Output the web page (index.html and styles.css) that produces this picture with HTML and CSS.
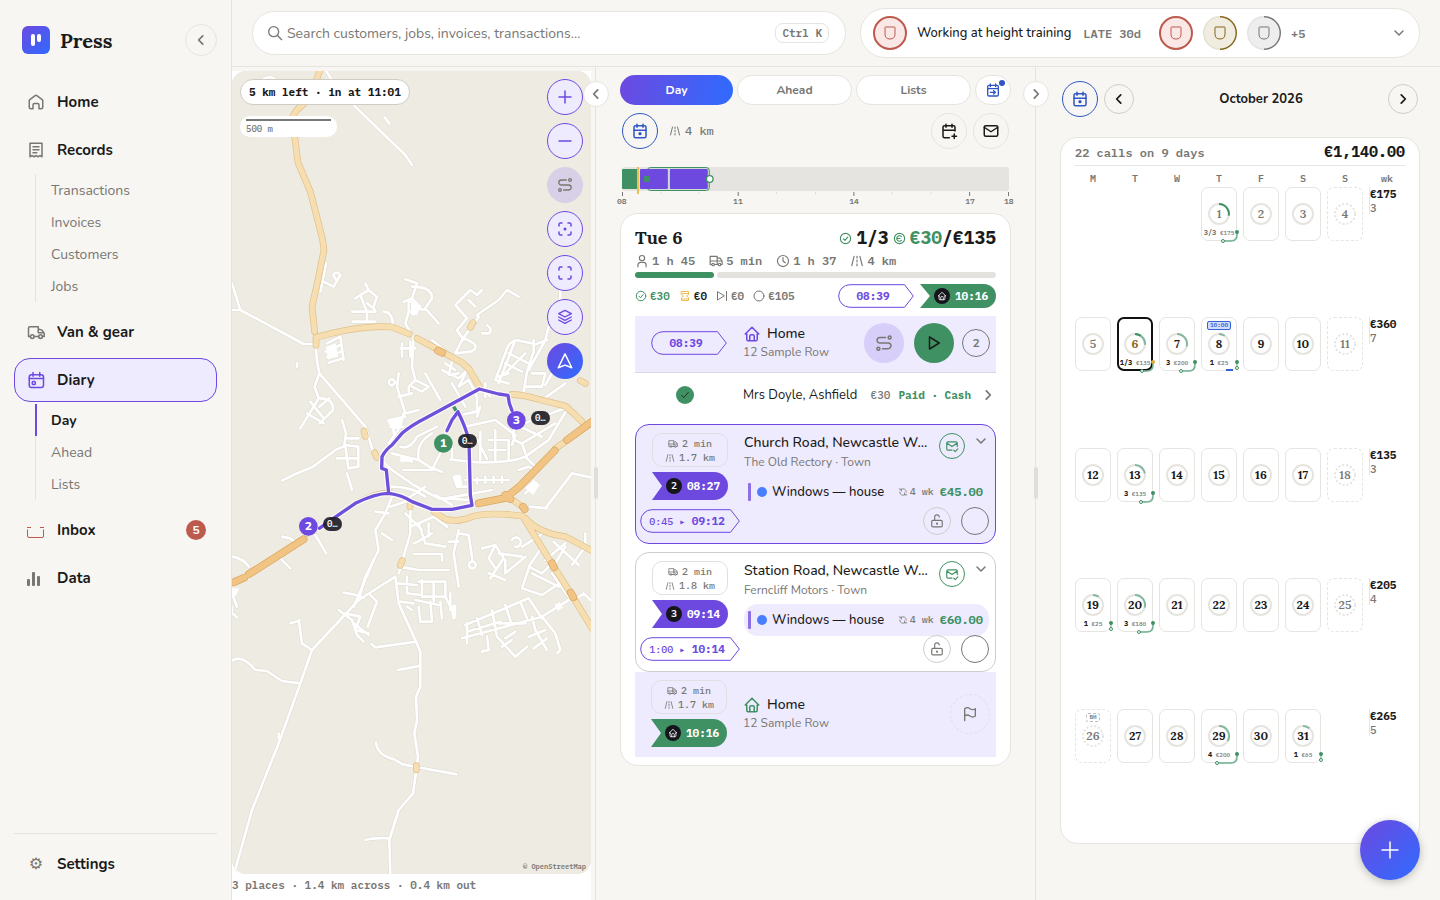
FILE: index.html
```html
<!DOCTYPE html>
<html lang="en">
<head>
<meta charset="utf-8">
<meta name="viewport" content="width=device-width, initial-scale=1">
<title>Press – Diary</title>
<link rel="stylesheet" href="styles.css">
</head>
<body>
<svg class="defs" aria-hidden="true">
  <symbol id="i-home" viewBox="0 0 24 24"><path d="M3 10.5a2 2 0 0 1 .8-1.6l7-5.3a2 2 0 0 1 2.4 0l7 5.3a2 2 0 0 1 .8 1.6V19a2 2 0 0 1-2 2h-3v-5a2 2 0 0 0-2-2h-4a2 2 0 0 0-2 2v5H5a2 2 0 0 1-2-2z"/></symbol>
  <symbol id="i-house" viewBox="0 0 24 24"><path d="M5 12H3l9-9 9 9h-2M5 12v7a2 2 0 0 0 2 2h10a2 2 0 0 0 2-2v-7M9 21v-6a2 2 0 0 1 2-2h2a2 2 0 0 1 2 2v6"/></symbol>
  <symbol id="i-receipt" viewBox="0 0 24 24"><path d="M4 21V3h16v18l-2.6-1.6L14.700 21 12 19.400 9.300 21l-2.700-1.600zM8 7.500h8M8 11.500h8M8 15.500h5"/></symbol>
  <symbol id="i-van" viewBox="0 0 24 24"><circle cx="7" cy="18" r="2.500"/><circle cx="18" cy="18" r="2.500"/><path d="M4.500 18H2V7a2 2 0 0 1 2-2h11v3l5 1.500 3 4.500v4h-2.500M9.500 18h6M15 8v5h7"/></symbol>
  <symbol id="i-truck" viewBox="0 0 24 24"><circle cx="7" cy="18" r="2.200"/><circle cx="18" cy="18" r="2.200"/><path d="M4.500 18H2V4h12v13.500M9.500 18h6M14 7h5l3.500 5v6h-2M2 12h12M14 12h8"/></symbol>
  <symbol id="i-diary" viewBox="0 0 24 24"><rect x="3" y="5" width="19" height="17" rx="3"/><path d="M8 2v5M17 2v5M3 10h19"/><rect x="7" y="14" width="4" height="4" rx="1"/></symbol>
  <symbol id="i-cal" viewBox="0 0 24 24"><rect x="4" y="5" width="16" height="16" rx="2"/><path d="M8 3v4M16 3v4M4 11h16"/><circle cx="12" cy="15.500" r="1.200" fill="currentColor"/></symbol>
  <symbol id="i-calgo" viewBox="0 0 24 24"><rect x="4" y="5" width="16" height="16" rx="2"/><path d="M8 3v4M16 3v4M4 10h16M8 15.500h7M13 13l2.500 2.500L13 18"/></symbol>
  <symbol id="i-caladd" viewBox="0 0 24 24"><path d="M12.500 21H6a2 2 0 0 1-2-2V7a2 2 0 0 1 2-2h12a2 2 0 0 1 2 2v5M8 3v4M16 3v4M4 11h16M16 19h6M19 16v6"/></symbol>
  <symbol id="i-mail" viewBox="0 0 24 24"><rect x="3" y="5" width="18" height="14" rx="2"/><path d="M3 7l9 6 9-6"/></symbol>
  <symbol id="i-mailok" viewBox="0 0 24 24"><path d="M12 19H5a2 2 0 0 1-2-2V7a2 2 0 0 1 2-2h14a2 2 0 0 1 2 2v6M3 7l9 6 9-6M15 19l2.500 2.500L22 17"/></symbol>
  <symbol id="i-left" viewBox="0 0 24 24"><path d="M15 5l-7 7 7 7"/></symbol>
  <symbol id="i-right" viewBox="0 0 24 24"><path d="M9 5l7 7-7 7"/></symbol>
  <symbol id="i-down" viewBox="0 0 24 24"><path d="M4 8l8 8 8-8"/></symbol>
  <symbol id="i-search" viewBox="0 0 24 24"><circle cx="10" cy="10" r="7.500"/><path d="M15.500 15.500L22 22"/></symbol>
  <symbol id="i-shield" viewBox="0 0 12 14"><path d="M1.500 1h9q.5 0 .5.500V8q0 5-5 5T1 8V1.500Q1 1 1.500 1z"/></symbol>
  <symbol id="i-plus" viewBox="0 0 24 24"><path d="M12 4v16M4 12h16"/></symbol>
  <symbol id="i-minus" viewBox="0 0 24 24"><path d="M4 12h16"/></symbol>
  <symbol id="i-route" viewBox="0 0 24 24"><circle cx="4.500" cy="19.500" r="2"/><circle cx="19.500" cy="4.500" r="2"/><path d="M10 19.500h7.500a3.500 3.500 0 0 0 0-7.500h-11a3.500 3.500 0 0 1 0-7.500H14"/></symbol>
  <symbol id="i-focus" viewBox="0 0 24 24"><path d="M4 8V6a2 2 0 0 1 2-2h2M16 4h2a2 2 0 0 1 2 2v2M20 16v2a2 2 0 0 1-2 2h-2M8 20H6a2 2 0 0 1-2-2v-2"/><circle cx="12" cy="12" r="1" fill="currentColor"/></symbol>
  <symbol id="i-frame" viewBox="0 0 24 24"><path d="M4 8V6a2 2 0 0 1 2-2h2M16 4h2a2 2 0 0 1 2 2v2M20 16v2a2 2 0 0 1-2 2h-2M8 20H6a2 2 0 0 1-2-2v-2"/></symbol>
  <symbol id="i-layers" viewBox="0 0 24 24"><path d="M12 2l9.500 5-9.500 5-9.500-5zM2.500 12l9.500 5 9.500-5M2.500 16.500L12 21.500l9.500-5"/></symbol>
  <symbol id="i-nav" viewBox="0 0 24 24"><path d="M12 2.500L21 21l-9-3.500L3 21z"/></symbol>
  <symbol id="i-person" viewBox="0 0 24 24"><circle cx="12" cy="7" r="4.500"/><path d="M5 22v-3a4.500 4.500 0 0 1 4.500-4.500h5A4.500 4.500 0 0 1 19 19v3"/></symbol>
  <symbol id="i-clock" viewBox="0 0 24 24"><circle cx="12" cy="12" r="9.500"/><path d="M12 6v6l4 3"/></symbol>
  <symbol id="i-road" viewBox="0 0 24 24"><path d="M7 4L3 20M17 4l4 16M12 4v3M12 10.500v3M12 17v3"/></symbol>
  <symbol id="i-okring" viewBox="0 0 24 24"><circle cx="12" cy="12" r="9.500"/><path d="M8 12.500l3 3 5-6"/></symbol>
  <symbol id="i-euro" viewBox="0 0 24 24"><circle cx="12" cy="12" r="9.500"/><path d="M15.500 8.500a5 5 0 1 0 0 7M7 12h6"/></symbol>
  <symbol id="i-ring" viewBox="0 0 24 24"><circle cx="12" cy="12" r="10"/></symbol>
  <symbol id="i-glass" viewBox="0 0 24 24"><path d="M5 3h14v6l-4 3 4 3v6H5v-6l4-3-4-3zM7 7h10M7 18h10"/></symbol>
  <symbol id="i-skip" viewBox="0 0 24 24"><path d="M3 4v16l13-8zM21 3v18"/></symbol>
  <symbol id="i-play" viewBox="0 0 24 24"><path d="M6 4v16l13-8z"/></symbol>
  <symbol id="i-check" viewBox="0 0 24 24"><path d="M4 13l5 5L20 6"/></symbol>
  <symbol id="i-loop" viewBox="0 0 24 24"><path d="M20 12A8 8 0 0 0 7 6M3 5h5v5M4 12a8 8 0 0 0 13 6M21 19h-5v-5"/></symbol>
  <symbol id="i-lock" viewBox="0 0 24 24"><rect x="3" y="11" width="18" height="11" rx="2"/><circle cx="12" cy="16.500" r=".8"/><path d="M8 11V6a4 4 0 0 1 8-1"/></symbol>
  <symbol id="i-flag" viewBox="0 0 24 24"><path d="M4 22V4q4-3 8 0t8 0v11q-4 3-8 0t-8 0"/></symbol>
  <symbol id="i-tagshape" viewBox="0 0 76 24"><path d="M12 .7H66.500L75.300 12 66.500 23.300H12A11.300 11.300 0 0 1 12 .7z"/></symbol>
  <symbol id="i-tagwide" viewBox="0 0 100 24"><path d="M12 .7H90.500L99.300 12 90.500 23.300H12A11.300 11.300 0 0 1 12 .7z"/></symbol>
</svg>

<div class="app">
  <aside class="side">
    <div class="brand">
      <svg class="logo" viewBox="0 0 28 28" aria-hidden="true"><defs><linearGradient id="lg" x1="0" y1="0" x2="1" y2="1"><stop offset="0" stop-color="#6d49e0"/><stop offset="1" stop-color="#2f6bff"/></linearGradient></defs><rect width="28" height="28" rx="6" fill="url(#lg)"/><rect x="9" y="8" width="4" height="12" rx="2" fill="#fff"/><rect x="15" y="8" width="4" height="8" rx="2" fill="#fff"/></svg>
      <span class="brand-name">Press</span>
      <button class="round r32" aria-label="Collapse menu"><svg class="ic s14"><use href="#i-left"/></svg></button>
    </div>
    <nav class="nav">
      <a class="item" href="#"><svg class="ic s18"><use href="#i-home"/></svg>Home</a>
      <a class="item" href="#"><svg class="ic s18"><use href="#i-receipt"/></svg>Records</a>
      <div class="sub">
        <a href="#">Transactions</a><a href="#">Invoices</a><a href="#">Customers</a><a href="#">Jobs</a>
      </div>
      <a class="item" href="#"><svg class="ic s18"><use href="#i-van"/></svg>Van &amp; gear</a>
      <a class="item on" href="#"><svg class="ic s18"><use href="#i-diary"/></svg>Diary</a>
      <div class="sub">
        <a class="cur" href="#">Day</a><a href="#">Ahead</a><a href="#">Lists</a>
      </div>
      <a class="item" href="#"><svg class="tray" viewBox="0 0 18 18"><path d="M.5 8.500V15q0 1.500 1.500 1.500h13q1.500 0 1.500-1.500V8.500M0 6.500h4M13 6.500h4"/></svg>Inbox<span class="badge">5</span></a>
      <a class="item" href="#"><svg class="bars" viewBox="0 0 18 18"><rect x="0" y="10" width="3" height="7" rx="1"/><rect x="5" y="3" width="3" height="14" rx="1"/><rect x="10" y="7" width="3" height="10" rx="1"/></svg>Data</a>
    </nav>
    <div class="side-foot"><a class="item" href="#"><span class="gear">⚙</span>Settings</a></div>
  </aside>

  <header class="top">
    <label class="search"><svg class="ic s16"><use href="#i-search"/></svg><input type="search" aria-label="Search" placeholder="Search customers, jobs, invoices, transactions…"><kbd>Ctrl K</kbd></label>
    <button class="alerts">
      <span class="due red"><svg><use href="#i-shield"/></svg></span>
      <span class="alert-name">Working at height training</span>
      <span class="late">LATE 30d</span>
      <span class="dues"><span class="due red"><svg><use href="#i-shield"/></svg></span><span class="due gold"><svg><use href="#i-shield"/></svg></span><span class="due grey"><svg><use href="#i-shield"/></svg></span></span>
      <span class="more">+5</span>
      <svg class="ic s12"><use href="#i-down"/></svg>
    </button>
  </header>

  <main class="cols">
    <section class="mapcol">
      <div class="map">
        <svg class="mapart" viewBox="0 -507 1077 2409" preserveAspectRatio="xMidYMid slice" role="img" aria-label="Route map">
          <defs>
            <g id="lanes">
              <path d="M280 -510L300 -480 370 -400 520 -255 540 -225M458 -368l14 18M95 -484q15 -8 32 0"/>
              <path d="M0 130L25 210 215 312H250M0 210H25M250 310L256 370 262 400 400 560 425 640 480 690 545 735 620 775 720 780M262 400L248 440 260 475 205 565M235 485l40 50M265 475q40 0 38 35l-40 40M225 520l50 30M262 500l30 -25M195 370v10"/>
              <path d="M285 310L325 290 335 360M280 335l45 -20M285 352l45 -18M290 368l45 -14"/>
              <path d="M282 70L265 155M275 125l30 15 20 -35q-10 -15 -22 0l10 15M400 130L410 150 385 165 370 175M410 150l25 20 -10 30M385 165l20 50v30M360 215h70M362 245h68M405 190l25 20M455 215q25 0 28 38"/>
              <path d="M520 118l35 12 -15 45 -25 10M540 140q60 0 60 35l-20 30L620 250M540 175l25 25 -15 20 -20 -8v-32l30 20M555 205l25 5M530 215L520 250 540 285"/>
              <path d="M670 195l45 -45 20 15 15 -15M670 195l35 40 -30 35 20 30M735 225l65 -45 25 -30 35 20M740 230l-50 70 -20 40M690 290l35 20q15 15 -10 25l-45 5M765 255q20 15 5 25h-20M710 180l20 20"/>
              <path d="M510 310v40M505 325h45M535 305v45M545 290L540 380 550 420 590 440 570 455 540 440M550 420l-20 20v15M500 400L495 440 520 520 560 510M485 420a9 9 0 1 0 1 1M500 470l40 -10M515 520L505 560 470 610"/>
              <path d="M580 400L625 480M660 430l40 70M640 370l30 20M630 390l50 25 20 -20M660 365l-10 40 30 -5M700 400l-20 40 30 -20 25 50M600 300L660 350M760 430v40M745 440l30 30"/>
              <path d="M985 150V180M950 260L940 300M860 300q-30 0 -40 40L790 420 830 430M850 300l-50 130M880 340l-60 60M905 300v35l-20 60 -10 60M850 300l50 10M830 340l60 30M820 370l50 25M900 400h40l-10 40H880M940 300l-50 90M960 400l-20 35M1000 430l-70 50M830 400l-30 10M905 315l40 -15"/>
              <path d="M735 470v45l-40 8M745 500l-10 30M700 560l90 -20 60 45 -10 30M705 605l30 -8 30 60M745 575v85M770 600h60v60M790 570v90M770 630h50M850 560L1010 500M850 560q-20 40 20 50l100 -60M1010 500l-60 100 -70 50q-80 30 -225 8M880 650l40 40M930 590l-65 -30M860 690l30 -10 20 10M870 610l10 30"/>
              <path d="M470 540l50 -10M475 560h40M485 550v30M505 620q30 10 50 -30l60 -30M560 660q-10 -50 40 -80M480 640l80 20 40 25 30 10M600 690l30 -60M515 690h80M510 655l30 10M660 650V620"/>
              <path d="M150 722l40 -20 50 -20 75 -55 35 -12M330 540l12 40 -5 35 42 5v60l-30 5 -8 -60M315 655h65M345 700l15 50M340 595h40"/>
              <path d="M700 720h130M735 715v15M760 710v18M785 710v18M810 710v18M665 710l10 30h30M640 775L780 750M610 765l50 30M480 740q60 0 100 30M520 780l60 -40"/>
              <path d="M940 805L1020 700 1077 712M895 800l50 5M880 760l35 -30M250 885l33 56M145 955l30 30M150 890l25 5 20 15M0 950q35 5 50 30"/>
              <path d="M480 770L460 820 430 870 440 930 400 1010 380 1080M475 800l60 -20v100L500 1000M430 815l40 5M520 820l50 50M535 860l70 -30 40 30M480 900l-30 -20M560 850l20 60 60 10M590 850v40M545 942h85v20M600 880q-50 30 -55 30M500 980l60 10h90M680 870L665 940 680 1040M680 880l30 5 12 80a10 10 0 1 1 -2 0M650 905h30"/>
              <path d="M750 925l40 -10 -20 40 20 30M790 915l25 40 -40 60M800 940l70 10M840 900a14 14 0 1 1 10 20M870 920l50 -30 10 30 -40 60 40 20 30 -30M880 950l-60 50M920 890l20 -20M890 985l-20 60 60 20 60 -40M900 1000l80 40M940 960l60 -50M965 905L1040 975M1000 920l-30 50M1060 880v40l-40 55M820 960v40M770 1000l50 20"/>
              <path d="M490 1010L380 1080 240 1230 205 1330 140 1510 60 1710 5 1905M425 960L365 1100M335 1058l30 5 30 10M490 1010L500 1090 550 1200 565 1235V1340L552 1370 555 1440 547 1480 558 1550 553 1590 543 1660 500 1710 472 1800 475 1902M553 1205L430 1222 418 1212M565 1277L525 1285 497 1290M0 1262q30 -20 70 28l35 3 45 30 55 7M240 1230L210 1210 200 1140M175 1150l28 -8M140 1480v15M432 1508q5 40 55 50l25 15 42 8 120 22M400 1800q25 -8 72 -5"/>
              <path d="M415 1065l20 20 -28 75M320 1110l40 30 15 45 20 20M340 1120l45 10 -15 40 40 10M365 1150l45 35"/>
              <path d="M495 1030l60 5M525 1010v50l45 5M560 1025h80v45h-70v-50M605 1025v60M505 1085l40 5M550 1080l70 15M560 1100l5 45h35l-5 -60M625 1085l5 50M640 1070l20 40 5 25M525 1100l15 10M655 1060v50"/>
              <path d="M690 1195l240 -65 80 -50M705 1150v60M700 1155l190 -80 40 60M735 1135l15 50M780 1110l15 80 55 60 35 -30M820 1095l20 60M865 1085l20 50M705 1175l100 -30M800 1150h80M765 1190l5 40 -20 5M820 1195l30 -20M840 1200l-30 20M930 1130l40 50 15 50 -10 10M900 1130l10 40 35 60M890 1190l50 -20M905 1225l40 -30M960 1000L1010 1070M1035 1075l20 -15 20 20M0 1060l15 40M0 1100v20l15 12"/>
            </g>
            <g id="yards"><path d="M282 320l30 -10 6 40 -30 8zM668 705h18l5 32h-20zM880 745l25 -25 18 15 -20 30zM465 540l42 -10v30l-25 12zM505 645l38 8v12h-38zM537 185h20v40h-20zM660 1095h12v40h-12zM968 1095l15 -8 10 15 -15 10zM0 1045h22l-10 22H0z"/></g>
            <g id="minor">
              <path d="M264 -510L250 -470Q232 -420 208 -402T180 -360L188 -310 198 -232 235 -145 252 -80 272 0 276 30 258 120 240 200 248 275"/>
              <path d="M252 316V292L300 280Q400 255 480 261L532 282M555 295L620 330 690 368 712 388 742 440M840 463Q880 465 920 478L1000 498 1030 525 1050 545M606 815L640 838Q680 848 720 830 770 815 870 828M873 830L960 972 1020 1066 1080 1165M880 835Q920 880 1000 890L1080 932M845 782L870 800M1045 422l15 8M511 962l-6 14M396 573l4 16M428 638l6 14M723 248l-8 14M534 795v6M553 1577v12"/>
              <path d="M970 626l28 -20"/>
            </g>
            <g id="major"><path d="M5 1027l32 -14M50 1003L215 898M740 790L820 774 860 742 968 632M820 765l15 12M1005 600L1080 545M618 332l12 6M960 970l6 12M1016 1058l8 14M873 800l5 8"/></g>
            <g id="trip"><path d="M262 865L300 838 370 790Q430 760 470 760L463 690 449 685 450 650Q460 630 480 615L510 580Q540 555 580 535L742 447 800 462 828 466 832 490 840 512M470 760Q510 765 540 785L600 808H660L720 796 715 765 711 605Q705 570 678 515L660 540 645 572"/></g>
          </defs>
          <rect y="-507" x="-2000" width="5000" height="2409" fill="#eeebe3"/>
          <g fill="none" stroke-linecap="round" stroke-linejoin="round">
            <use href="#lanes" stroke="#dcd9d0" stroke-width="11"/>
            <use href="#lanes" stroke="#fff" stroke-width="8"/>
            <use href="#yards" fill="#fff"/>
            <use href="#minor" stroke="#dfbf88" stroke-width="20"/>
            <use href="#minor" stroke="#f6deb0" stroke-width="16"/>
            <use href="#major" stroke="#d9a35b" stroke-width="23"/>
            <use href="#major" stroke="#f1c483" stroke-width="19"/>
            <path d="M215 898L370 783Q430 748 480 750" stroke="#dfbf88" stroke-width="3"/>
            <use href="#trip" stroke="#fff" stroke-width="17" opacity=".8"/>
            <use href="#trip" stroke="#6e50da" stroke-width="10"/>
            <path d="M665 500l7 12" stroke="#3f9163" stroke-width="10" stroke-linecap="butt"/>
          </g>
          <g class="pins">
            <circle cx="634" cy="610" r="28" fill="#3f9163"/><text x="634" y="622">1</text>
            <circle cx="229" cy="859" r="28" fill="#6d49e0"/><text x="229" y="871">2</text>
            <circle cx="853" cy="541" r="28" fill="#6d49e0"/><text x="853" y="553">3</text>
          </g>
          <g class="eta">
            <rect x="678" y="582" width="57" height="42" rx="21"/><text x="706" y="612">0…</text>
            <rect x="273" y="831" width="57" height="42" rx="21"/><text x="301" y="861">0…</text>
            <rect x="897" y="513" width="57" height="42" rx="21"/><text x="925" y="543">0…</text>
          </g>
        </svg>
        <div class="mapinfo">
          <span class="left">5 km left · in at 11:01</span>
          <span class="scale">500 m</span>
        </div>
        <div class="mapbtns">
          <button aria-label="Zoom in"><svg class="ic s18"><use href="#i-plus"/></svg></button>
          <button aria-label="Zoom out"><svg class="ic s18"><use href="#i-minus"/></svg></button>
          <button class="off" aria-label="Route"><svg class="ic s16"><use href="#i-route"/></svg></button>
          <button aria-label="Centre"><svg class="ic s18"><use href="#i-focus"/></svg></button>
          <button aria-label="Fit"><svg class="ic s18"><use href="#i-frame"/></svg></button>
          <button aria-label="Layers"><svg class="ic s16"><use href="#i-layers"/></svg></button>
          <button class="go" aria-label="Navigate"><svg class="ic s18"><use href="#i-nav"/></svg></button>
        </div>
        <span class="credit">© OpenStreetMap</span>
      </div>
      <p class="mapfoot">3 places · 1.4 km across · 0.4 km out</p>
    </section>

    <section class="day">
      <button class="round fold" aria-label="Collapse map"><svg class="ic s14"><use href="#i-left"/></svg></button>
      <i class="grip"></i>
      <div class="tabs">
        <button class="on">Day</button><button>Ahead</button><button>Lists</button>
        <button class="tabicon" aria-label="Jump to day"><svg class="ic s16"><use href="#i-calgo"/></svg><i></i></button>
      </div>
      <div class="tools">
        <button class="round r36 blue" aria-label="Today"><svg class="ic s18"><use href="#i-cal"/></svg></button>
        <span class="dist"><svg class="ic s12"><use href="#i-road"/></svg>4 km</span>
        <button class="round r36 dark push" aria-label="Add visit"><svg class="ic s18"><use href="#i-caladd"/></svg></button>
        <button class="round r36 dark" aria-label="Message"><svg class="ic s18"><use href="#i-mail"/></svg></button>
      </div>
      <div class="timeline">
        <svg viewBox="0 0 388 28" preserveAspectRatio="none" aria-hidden="true">
          <rect width="388" height="24" y="0" rx="3" fill="#e6e4e0"/>
          <rect x="25.500" y=".5" width="62" height="23" rx="3" fill="#cfdcd5" stroke="#3f9163"/>
          <rect y="2" width="16" height="20" rx="1" fill="#3f9163"/>
          <rect x="18" y="2" width="28" height="20" rx="1" fill="#6d49e0"/><rect x="48" y="2" width="38" height="20" rx="1" fill="#6d49e0"/>
          <rect x="22" y="9" width="6" height="6" rx="1" fill="#3f9163"/>
          <rect x="15" width="2" height="27" fill="#ecbf4c"/>
          <circle cx="88" cy="12" r="3.300" fill="#fff" stroke="#3f9163" stroke-width="1.300"/>
          <path d="M.5 25v4M116.500 25v4M232.500 25v4M348.500 25v4M387.500 25v4" stroke="#777"/>
          <path d="M39 25v2M77 25v2M155 25v2M194 25v2M271 25v2M310 25v2" stroke="#ddd"/>
        </svg>
        <div class="hours"><span>08</span><span>11</span><span>14</span><span>17</span><span>18</span></div>
      </div>

      <article class="card">
        <div class="headline"><h1>Tue 6</h1><p class="score"><svg class="ic s14 green"><use href="#i-okring"/></svg>1/3 <svg class="ic s14 green"><use href="#i-euro"/></svg><span><b class="green">€30</b>/€135</span></p></div>
        <div class="stats"><span><svg class="ic s14"><use href="#i-person"/></svg>1 h 45</span><span><svg class="ic s14"><use href="#i-truck"/></svg>5 min</span><span><svg class="ic s14"><use href="#i-clock"/></svg>1 h 37</span><span><svg class="ic s14"><use href="#i-road"/></svg>4 km</span></div>
        <div class="meter"><i></i><i></i></div>
        <div class="money">
          <span class="green"><svg class="ic s12"><use href="#i-okring"/></svg>€30</span>
          <span class="ink"><svg class="ic s12 amber"><use href="#i-glass"/></svg>€0</span>
          <span><svg class="ic s12"><use href="#i-skip"/></svg>€0</span>
          <span><svg class="ic s12"><use href="#i-ring"/></svg>€105</span>
          <span class="tag push"><svg><use href="#i-tagshape"/></svg>08:39</span>
          <span class="flag home low"><em><svg class="ic s12"><use href="#i-house"/></svg></em>10:16</span>
        </div>

        <div class="base">
          <div class="slot"><span class="tag"><svg><use href="#i-tagshape"/></svg>08:39</span></div>
          <div class="where"><h2><svg class="ic s18 violet"><use href="#i-house"/></svg>Home</h2><p>12 Sample Row</p></div>
          <button class="disc lilac" aria-label="Route"><svg class="ic s18"><use href="#i-route"/></svg></button>
          <button class="disc play" aria-label="Start"><svg class="ic s18"><use href="#i-play"/></svg></button>
          <button class="disc count">2</button>
        </div>

        <div class="done">
          <div class="slot"><span class="tick"><svg class="ic s10"><use href="#i-check"/></svg></span></div>
          <span class="who">Mrs Doyle, Ashfield</span><span class="sum">€30</span><span class="paid">Paid · Cash</span><svg class="ic s14"><use href="#i-right"/></svg>
        </div>

        <div class="stop active">
          <div class="slot">
            <div class="leg"><span><svg class="ic s10"><use href="#i-truck"/></svg>2 min</span><span><svg class="ic s10"><use href="#i-road"/></svg>1.7 km</span></div>
            <span class="flag"><em>2</em>08:27</span>
            <span class="tag wide"><svg><use href="#i-tagwide"/></svg><small>0:45 ▸</small> 09:12</span>
          </div>
          <div class="visit">
            <div class="vhead"><div class="vname"><h2>Church Road, Newcastle W…</h2><p>The Old Rectory · Town</p></div><button class="disc sent" aria-label="Sent"><svg class="ic s14"><use href="#i-mailok"/></svg></button><button class="bare" aria-label="Expand"><svg class="ic s12"><use href="#i-down"/></svg></button></div>
            <div class="job"><i class="bar"></i><i class="dot"></i><span class="jname">Windows — house</span><span class="freq"><svg class="ic s10"><use href="#i-loop"/></svg>4 wk</span><b>€45.00</b></div>
            <div class="acts"><button class="disc lock" aria-label="Lock"><svg class="ic s14"><use href="#i-lock"/></svg></button><button class="disc mark" aria-label="Mark done"></button></div>
          </div>
        </div>

        <div class="stop">
          <div class="slot">
            <div class="leg"><span><svg class="ic s10"><use href="#i-truck"/></svg>2 min</span><span><svg class="ic s10"><use href="#i-road"/></svg>1.8 km</span></div>
            <span class="flag"><em>3</em>09:14</span>
            <span class="tag wide"><svg><use href="#i-tagwide"/></svg><small>1:00 ▸</small> 10:14</span>
          </div>
          <div class="visit">
            <div class="vhead"><div class="vname"><h2>Station Road, Newcastle W…</h2><p>Ferncliff Motors · Town</p></div><button class="disc sent" aria-label="Sent"><svg class="ic s14"><use href="#i-mailok"/></svg></button><button class="bare" aria-label="Expand"><svg class="ic s12"><use href="#i-down"/></svg></button></div>
            <div class="job"><i class="bar"></i><i class="dot"></i><span class="jname">Windows — house</span><span class="freq"><svg class="ic s10"><use href="#i-loop"/></svg>4 wk</span><b>€60.00</b></div>
            <div class="acts"><button class="disc lock" aria-label="Lock"><svg class="ic s14"><use href="#i-lock"/></svg></button><button class="disc mark" aria-label="Mark done"></button></div>
          </div>
        </div>

        <div class="base end">
          <div class="slot">
            <div class="leg"><span><svg class="ic s10"><use href="#i-truck"/></svg>2 min</span><span><svg class="ic s10"><use href="#i-road"/></svg>1.7 km</span></div>
            <span class="flag home"><em><svg class="ic s12"><use href="#i-house"/></svg></em>10:16</span>
          </div>
          <div class="where"><h2><svg class="ic s18 green"><use href="#i-house"/></svg>Home</h2><p>12 Sample Row</p></div>
          <button class="disc finish" aria-label="Finish"><svg class="ic s16"><use href="#i-flag"/></svg></button>
        </div>
      </article>
    </section>

    <section class="month">
      <button class="round fold" aria-label="Collapse calendar"><svg class="ic s14"><use href="#i-right"/></svg></button>
      <i class="grip"></i>
      <div class="mhead">
        <button class="round r36 blue" aria-label="Today"><svg class="ic s18"><use href="#i-cal"/></svg></button>
        <button class="round r30 dark" aria-label="Previous month"><svg class="ic s14"><use href="#i-left"/></svg></button>
        <h2>October 2026</h2>
        <button class="round r30 dark" aria-label="Next month"><svg class="ic s14"><use href="#i-right"/></svg></button>
      </div>
      <div class="mcard">
        <div class="mtotal"><span>22 calls on 9 days</span><b>€1,140.00</b></div>
        <div class="dow"><span>M</span><span>T</span><span>W</span><span>T</span><span>F</span><span>S</span><span>S</span><span>wk</span></div>
        <div class="weeks" id="weeks"></div>
      </div>
    </section>
  </main>
  <button class="fab" aria-label="Add"><svg class="ic"><use href="#i-plus"/></svg></button>
</div>
<script src="calendar.js"></script>
</body>
</html>
```

FILE: styles.css
```css
:root {
  --sans: Nunito, Lato, "Noto Sans", sans-serif;
  --mono: "IBM Plex Mono", "Liberation Mono", monospace;
  --serif: Lora, "Liberation Serif", serif;
  --bg: #f7f6f2;
  --line: #e6e4df;
  --ink: #1a1a1a;
  --mute: #777773;
  --violet: #6d49e0;
  --lilac: #eeebfe;
  --green: #3f9163;
  --blue: #2f56c4;
  --red: #bd5a4e;
}
* { box-sizing: border-box; }
body { margin: 0; background: var(--bg); color: var(--ink); font: 14px/18px var(--sans); }
h1, h2, p { margin: 0; font-weight: 400; }
button { font: inherit; color: inherit; background: none; border: 0; padding: 0; cursor: pointer; }
a { color: inherit; text-decoration: none; }
.defs { position: absolute; width: 0; height: 0; }
.ic { fill: none; stroke: currentColor; stroke-width: 2; stroke-linecap: round; stroke-linejoin: round; flex: none; display: block; }
.s10 { width: 10px; height: 10px; }
.s12 { width: 12px; height: 12px; }
.s14 { width: 14px; height: 14px; }
.s16 { width: 16px; height: 16px; }
.s18 { width: 18px; height: 18px; }
.push { margin-left: auto; }
.green { color: var(--green); }
.violet { color: var(--violet); }
.amber { color: #ecbf4c; }
.round { display: grid; place-items: center; flex: none; border: 1px solid var(--line); border-radius: 50%; color: var(--mute); }
.round .s14 { stroke-width: 3; }
.r30 { width: 30px; height: 30px; border-color: #d0cec9; }
.r32 { width: 32px; height: 32px; }
.r36 { width: 36px; height: 36px; }
.round.blue { border-color: var(--blue); color: var(--blue); }
.round.dark { color: var(--ink); }

.app { display: grid; grid-template: auto 1fr / 232px minmax(0, 1fr); min-height: 100vh; }

.side { grid-row: 1 / 3; display: flex; flex-direction: column; padding: 24px 14px 14px; border-right: 1px solid var(--line); }
.brand { display: flex; align-items: center; gap: 10px; padding-left: 8px; margin-bottom: 24px; }
.logo { width: 28px; height: 28px; }
.brand-name { font: 700 20px/30px var(--serif); padding-top: 1px; }
.brand .round { margin-left: auto; }
.nav { display: flex; flex-direction: column; gap: 4px; }
.item { display: flex; align-items: center; gap: 12px; height: 44px; padding: 0 10px 0 12px; border: 1px solid transparent; border-radius: 16px; font-size: 15px; font-weight: 700; }
.item .ic { color: var(--mute); }
.item.on { background: var(--lilac); border-color: var(--violet); }
.item.on .ic { color: var(--violet); }
.sub { display: flex; flex-direction: column; margin: -2px 0 4px 21px; border-left: 1px solid var(--line); color: var(--mute); }
.sub a { padding: 8px 15px 6px; height: 32px; font-size: 14px; }
.sub .cur { color: var(--ink); font-weight: 700; border-left: 2px solid var(--violet); margin-left: -1px; padding-left: 14px; }
.tray, .bars { width: 18px; height: 18px; }
.tray { fill: none; stroke: var(--red); overflow: visible; }
.bars { fill: var(--mute); }
.badge { margin-left: auto; width: 20px; height: 20px; border-radius: 50%; background: var(--red); color: #fff; font-size: 12px; line-height: 20px; text-align: center; }
.gear { width: 18px; text-align: center; font: 16px/18px "DejaVu Sans", sans-serif; color: var(--mute); }
.side-foot { margin-top: auto; border-top: 1px solid var(--line); padding-top: 8px; }

.top { display: grid; grid-template-columns: minmax(0, 594fr) minmax(0, 560fr); align-items: center; gap: 14px; padding: 8px 20px; height: 67px; border-bottom: 1px solid var(--line); }
.search { display: flex; align-items: center; gap: 4px; height: 44px; padding: 0 16px 0 14px; background: #fff; border: 1px solid var(--line); border-radius: 22px; color: var(--mute); }
.search input { flex: 1; min-width: 0; border: 0; outline: 0; background: none; font: 14px/18px var(--sans); padding: 1px 0 0; }
.search input::placeholder { color: var(--mute); opacity: 1; }
kbd { font: 600 11px/16px var(--mono); border: 1px solid var(--line); border-radius: 8px; padding: 1px 6px; }
.alerts { display: flex; align-items: center; gap: 10px; height: 50px; padding: 0 14px 0 12px; background: #fff; border: 1px solid var(--line); border-radius: 25px; }
.due { width: 34px; height: 34px; border-radius: 50%; display: grid; place-items: center; }
.due svg { width: 12px; height: 14px; fill: none; stroke: currentColor; }
.due.red { color: var(--red); background: #f9e8e6; border: 2px solid; }
.due.gold { color: #86651a; background: radial-gradient(circle, #f0ecdf 15px, transparent 16px), conic-gradient(#86651a 50%, #e4e1d3 0); }
.due.grey { color: #777; background: radial-gradient(circle, #eeeeee 15px, transparent 16px), conic-gradient(#777 50%, #e2e2e2 0); }
.dues { display: flex; gap: 10px; margin-left: 8px; }
.alert-name { white-space: nowrap; font-size: 13px; font-weight: 500; padding-right: 2px; }
.late, .more { font: 600 12px/18px var(--mono); color: var(--mute); white-space: nowrap; padding-top: 2px; }
.alerts > .ic { color: var(--mute); margin-left: auto; stroke-width: 3; }

.cols { display: grid; grid-template-columns: minmax(0, 364fr) minmax(0, 440fr) minmax(0, 404fr); }
.mapcol { display: flex; flex-direction: column; margin: 4px 5px 0 0; background: #fff; }
.map { position: relative; flex: 1; border-radius: 14px; overflow: hidden; background: #eeebe3; }
.mapart { position: absolute; inset: 0; width: 100%; height: 100%; }
.pins text { fill: #fff; font: 800 36px var(--sans); text-anchor: middle; }
.eta rect { fill: #1e1e26; opacity: .92; }
.eta text { fill: #fff; font: 600 27px var(--mono); text-anchor: middle; }
.mapinfo { position: absolute; top: 8px; left: 8px; display: flex; flex-direction: column; align-items: flex-start; gap: 11px; }
.left { font: 700 11px/24px var(--mono); background: #fff; border: 1px solid #cfccc4; border-radius: 13px; padding: 0 8px; }
.scale { width: 97px; height: 21px; background: #fff; border-radius: 10px; padding: 3px 6px; font: 500 9px/15px var(--mono); color: var(--mute); }
.scale::before { content: ""; display: block; height: 2px; background: #777; }
.mapbtns { position: absolute; top: 8px; right: 8px; display: flex; flex-direction: column; gap: 8px; }
.mapbtns button { width: 36px; height: 36px; border-radius: 50%; display: grid; place-items: center; background: var(--lilac); border: 1px solid var(--violet); color: var(--violet); }
.mapbtns .off { background: #d8d0e6; border-color: #d8d0e6; color: var(--mute); }
.mapbtns .go { background: linear-gradient(135deg, #6d49e0, #2f6bff); border: 0; color: #fff; }
.credit { position: absolute; right: 5px; bottom: 2px; font: 600 7px/10px var(--mono); color: var(--mute); }
.mapfoot { font: 600 11px/22px var(--mono); color: var(--mute); padding-bottom: 4px; }

.day, .month { position: relative; border-left: 1px solid var(--line); }
.day { padding: 8px 25px 8px 24px; margin-left: -1px; }
.month { padding: 14px 20px 56px 24px; margin-left: -1px; }
.fold { position: absolute; left: -13px; top: 14px; width: 26px; height: 26px; background: #fff; }
.grip { position: absolute; left: -2px; top: 48%; width: 4px; height: 32px; border-radius: 2px; background: #e0ded9; }
.tabs { display: flex; gap: 4px; }
.tabs button { flex: 1; height: 30px; border-radius: 15px; background: #fff; border: 1px solid var(--line); font-size: 12px; font-weight: 700; color: var(--mute); }
.tabs .on { background: linear-gradient(100deg, #6d49e0, #2f6bff); border: 0; color: #fff; }
.tabs .tabicon { flex: 0 0 36px; position: relative; display: grid; place-items: center; color: var(--blue); }
.tabicon i { position: absolute; right: 5px; top: 4px; width: 6px; height: 6px; border-radius: 50%; background: var(--blue); }
.tools { display: flex; align-items: center; gap: 6px; padding: 8px 2px 18px; }
.dist { display: flex; align-items: center; gap: 4px; margin-left: 5px; font: 500 12px/18px var(--mono); color: var(--mute); }
.timeline { margin: 0 2px; }
.timeline svg { display: block; width: 100%; height: 28px; overflow: visible; }
.hours { display: grid; grid-template-columns: 3fr 3fr 3fr 1fr 0; font: 600 8px/12px var(--mono); color: var(--mute); }
.hours span { margin-left: -5px; width: 10px; }

.card { margin-top: 6px; background: #fff; border: 1px solid var(--line); border-radius: 18px; padding: 13px 14px 8px; }
.headline { display: flex; align-items: center; justify-content: space-between; height: 22px; }
h1 { font: 700 18px/22px var(--serif); }
.score { display: flex; align-items: center; gap: 4px; font: 700 18px/22px var(--mono); }
.score .ic { width: 13px; height: 13px; }
.stats { display: flex; gap: 14px; margin-top: 2px; font: 600 12px/20px var(--mono); color: var(--mute); }
.stats span, .money > span { display: flex; align-items: center; gap: 3px; }
.meter { display: flex; gap: 3px; margin-top: 1px; }
.meter i { height: 6px; flex: 281; background: #e4e2de; border-radius: 3px; }
.meter i:first-child { flex: 80; background: var(--green); }
.money { display: flex; align-items: center; gap: 9px; margin: 6px 0 8px; font: 600 11px/18px var(--mono); color: var(--mute); }
.money .flag { margin-left: -3px; gap: 5px; }
.ink { color: var(--ink); }
.tag { position: relative; display: block; width: 76px; height: 24px; font: 700 11px/24px var(--mono); color: var(--violet); text-align: center; padding-right: 6px; white-space: nowrap; }
.money > .tag { display: block; }
.tag svg { position: absolute; inset: 0; width: 100%; height: 100%; fill: none; stroke: var(--violet); stroke-width: 1; }
.tag.wide { width: 100px; }
.tag small { font: 500 10px/24px var(--mono); }
.flag { display: flex; align-items: center; justify-content: flex-end; gap: 5px; width: 76px; height: 28px; padding-right: 8px; background: var(--violet); color: #fff; font: 700 11px/24px var(--mono); border-radius: 0 14px 14px 0; clip-path: polygon(0 0, 100% 0, 100% 100%, 0 100%, 10px 50%); }
.flag.home { background: var(--green); }
.flag.low { height: 24px; }
.flag em { width: 16px; height: 16px; border-radius: 50%; background: #15151c; display: grid; place-items: center; font: 700 10px/16px var(--sans); }
.flag em .ic { width: 10px; height: 10px; }

.base { display: flex; align-items: center; gap: 8px; background: var(--lilac); border-bottom: 1px solid #d9d6e6; padding: 7px 6px 9px 4px; }
.slot { flex: none; width: 100px; display: flex; flex-direction: column; align-items: center; gap: 5px; }
.base .slot { margin-right: -4px; }
.where { flex: 1; }
.where h2 { display: flex; align-items: center; gap: 6px; font-size: 14px; line-height: 18px; font-weight: 500; }
.where p, .vname p { font-size: 12px; line-height: 18px; color: var(--mute); }
.disc { flex: none; display: grid; place-items: center; width: 40px; height: 40px; border-radius: 50%; }
.lilac { background: #d7cefa; color: var(--mute); }
.play { background: var(--green); margin-left: 2px; }
.count { width: 28px; height: 28px; border: 1px solid #777; color: var(--mute); font: 700 12px/18px var(--sans); }
.done { display: flex; align-items: center; gap: 8px; height: 43px; margin-bottom: 8px; padding-right: 1px; }
.done .who { flex: 1; font-size: 13px; white-space: nowrap; }
.done > .ic { color: var(--mute); margin-left: 2px; stroke-width: 3; }
.tick { width: 18px; height: 18px; border-radius: 50%; background: var(--green); display: grid; place-items: center; }
.sum { font: 500 11px/18px var(--mono); color: var(--mute); }
.paid { font: 700 11px/18px var(--mono); color: var(--green); }

.stop { display: flex; gap: 4px; border: 1px solid #cfcdc8; border-radius: 14px; padding: 8px 6px 8px 4px; }
.stop.active { background: var(--lilac); border-color: var(--violet); margin-bottom: 8px; }
.stop .slot { gap: 0; justify-content: space-between; }
.stop .slot .wide { margin: 4px 0 2px; }
.leg { width: 76px; height: 34px; border: 1px solid #e1dee4; border-radius: 10px; padding: 3px 0; font: 500 10px/14px var(--mono); color: var(--mute); }
.leg span { display: flex; align-items: center; justify-content: center; gap: 4px; height: 14px; }
.visit { flex: 1; min-width: 0; }
.vhead { display: flex; gap: 10px; height: 43px; }
.vname { flex: 1; min-width: 0; padding-top: 1px; }
.vname h2 { font-size: 14px; line-height: 18px; font-weight: 500; white-space: nowrap; margin-bottom: 1px; }
.sent { width: 26px; height: 26px; border: 1px solid var(--green); color: var(--green); }
.bare { align-self: flex-start; padding: 2px 2px 0 0; color: var(--mute); }
.bare .ic { stroke-width: 3; }
.job { display: flex; align-items: center; height: 32px; border-radius: 14px; background: var(--lilac); padding: 0 6px 0 4px; }
.bar { width: 3px; height: 18px; border-radius: 1px; background: #8a70e4; margin-right: 6px; }
.dot { width: 10px; height: 10px; border-radius: 50%; background: #4a7dff; margin-right: 5px; }
.jname { flex: 1; white-space: nowrap; font-size: 13px; font-weight: 500; }
.freq { display: flex; align-items: center; gap: 2px; font: 500 10px/18px var(--mono); color: var(--mute); margin-right: 6px; }
.job b { font: 700 12px/18px var(--mono); color: var(--green); }
.acts { display: flex; justify-content: flex-end; gap: 10px; margin-top: -1px; }
.lock { width: 28px; height: 28px; border: 1px solid #cfcdc8; color: var(--mute); }
.mark { width: 28px; height: 28px; border: 1px solid #777; }
.base.end { border: 0; padding-top: 8px; padding-bottom: 10px; }
.finish { border: 1px dashed #e1dee8; color: var(--mute); }

.mhead { display: flex; align-items: center; gap: 6px; padding: 0 2px; }
.mhead h2 { flex: 1; text-align: center; font-size: 13px; font-weight: 700; line-height: 18px; }
.mcard { display: flex; flex-direction: column; height: calc(100% - 56px); margin-top: 20px; background: #fff; border: 1px solid var(--line); border-radius: 18px; padding: 4px 14px; }
.mtotal { display: flex; justify-content: space-between; align-items: center; font: 600 12px/22px var(--mono); color: var(--mute); border-bottom: 1px solid var(--line); padding-bottom: 1px; }
.mtotal b { font: 700 15px/20px var(--mono); color: var(--ink); padding-bottom: 2px; }
.dow, .week { display: grid; grid-template-columns: repeat(8, minmax(0, 1fr)); gap: 6px; }
.dow { font: 600 10px/17px var(--mono); color: var(--mute); text-align: center; padding-top: 4px; }
.weeks { flex: 1; display: grid; grid-template-rows: repeat(5, 1fr); }
.cell { position: relative; height: 54px; border: 1px solid var(--line); border-radius: 7px; display: grid; place-items: center; }
.cell.rest { border-style: dashed; }
.cell.today { border: 2px solid #111; }
.dial { width: 22px; height: 22px; overflow: visible; }
.dial circle, .dial path { fill: none; stroke: #e6e4df; stroke-width: 2; }
.dial path { stroke: #86b8a1; }
.dial path.full { stroke: var(--green); }
.dial text { font: 700 12px var(--serif); text-anchor: middle; fill: var(--ink); }
.past .dial text, .rest .dial text { fill: var(--mute); font-weight: 600; }
.today .dial text { fill: #86651a; }
.rest .dial circle { stroke-dasharray: 2 2; }
.load { position: absolute; left: -2px; right: -2px; bottom: 3px; text-align: center; white-space: nowrap; font: 500 6px/8px var(--mono); color: var(--mute); }
.load b { font-size: 7px; font-weight: 700; color: var(--ink); }
.past .load b { color: var(--mute); }
.today .load { left: -3px; right: -3px; bottom: 2px; }
.trip { position: absolute; inset: -1px; width: calc(100% + 2px); height: 54px; overflow: visible; fill: none; stroke: #6fae90; }
.today .trip { inset: -2px; }
.trip .pt { fill: var(--green); stroke: none; }
.trip .end { fill: #fff; stroke: var(--green); }
.note { position: absolute; top: 3px; padding: 0 2px; font: 600 6px/7px var(--mono); border: 1px solid #3561d8; border-radius: 2px; color: #3561d8; background: #cfdcfb; }
.note.bh { color: var(--mute); background: none; border: 1px dashed #bbb; }
.blip { position: absolute; left: 24px; bottom: -1px; width: 7px; height: 2px; background: #3561d8; }
.wk { height: 27px; border-left: 1px solid var(--line); font: 500 11px/14px var(--mono); color: var(--mute); }
.wk b { display: block; font-weight: 700; color: var(--ink); }

.fab { position: fixed; right: 20px; bottom: 20px; width: 60px; height: 60px; border-radius: 50%; display: grid; place-items: center; background: linear-gradient(135deg, #6d49e0, #2f6bff); color: #fff; box-shadow: 0 2px 8px rgba(0, 0, 0, .25); }
.fab .ic { width: 24px; height: 24px; stroke-width: 1.500; }
```

FILE: calendar.js
```js
// load: [calls, takings, arc in degrees, x where the trip line ends (0 = short trip)]
const loads = {
  1: ["3/3", "€175", 100, 22], 6: ["1/3", "€135", 95, 25], 7: ["3", "€200", 105, 22],
  8: ["1", "€25", 35, 0], 13: ["3", "€135", 80, 24], 19: ["1", "€25", 35, 0],
  20: ["3", "€180", 105, 22], 29: ["4", "€200", 120, 16], 31: ["1", "€65", 40, 0]
};
const totals = [["€175", 3], ["€360", 7], ["€135", 3], ["€205", 4], ["€265", 5]];
const today = 6;

function arc(deg) {
  const a = deg * Math.PI / 180;
  return `M11 1A10 10 0 0 1 ${(11 + 10 * Math.sin(a)).toFixed(1)} ${(11 - 10 * Math.cos(a)).toFixed(1)}`;
}

function cell(day, col) {
  if (day < 1 || day > 31) return "<span></span>";
  const rest = col === 6 || day === 26;
  const cls = ["cell", rest ? "rest" : "", day < today ? "past" : "", day === today ? "today" : ""].join(" ");
  const load = loads[day];
  let extra = "";
  let ring = "";
  if (load) {
    ring = `<path class="${day < today ? "full" : ""}" d="${arc(load[2])}"/>`;
    if (day === today) ring += `<path class="full" d="${arc(35)}"/>`;
    extra += `<span class="load"><b>${load[0]}</b> ${load[1]}</span>`;
    const dot = day === today ? ' style="fill:#dca93a"' : "";
    extra += load[3]
      ? `<svg class="trip"><path stroke-width="1.5" d="M36 45V48Q36 54 30 54H${load[3]}"/><circle class="pt" cx="36" cy="45" r="2"${dot}/><circle class="end" cx="${load[3]}" cy="54" r="1.5"/></svg>`
      : `<svg class="trip"><path d="M36 45V50"/><circle class="pt" cx="36" cy="45" r="2"/><circle class="end" cx="36" cy="51" r="1.5"/></svg>`;
  }
  if (day === 8) extra += `<span class="note">10:00</span><i class="blip"></i>`;
  if (day === 26) extra += `<span class="note bh">BH</span>`;
  return `<div class="${cls}"><svg class="dial" viewBox="0 0 22 22"><circle cx="11" cy="11" r="10"/>${ring}<text x="11" y="15">${day}</text></svg>${extra}</div>`;
}

document.getElementById("weeks").innerHTML = totals.map((t, w) => {
  let out = "";
  for (let c = 0; c < 7; c++) out += cell(w * 7 + c - 2, c);
  return `<div class="week">${out}<div class="wk"><b>${t[0]}</b>${t[1]}</div></div>`;
}).join("");
```
